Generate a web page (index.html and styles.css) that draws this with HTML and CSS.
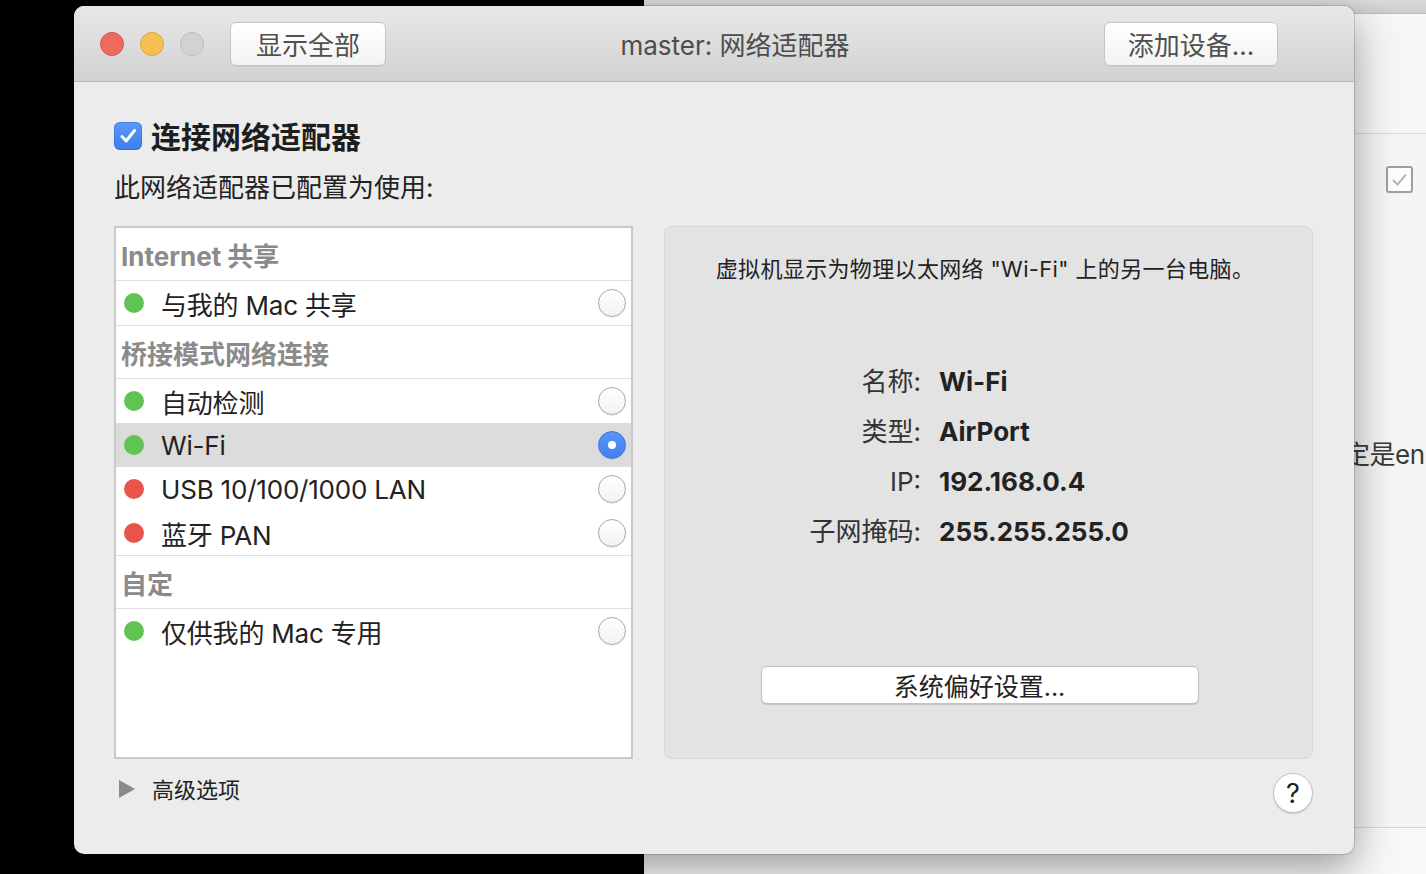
FILE: index.html
```html
<!DOCTYPE html>
<html lang="zh-CN">
<head>
<meta charset="utf-8">
<title>master: 网络适配器</title>
<link rel="stylesheet" href="styles.css">
</head>
<body>
<div class="desktop">
  <div class="dark"></div>
  <div class="app">
    <div class="app-top"></div>
    <div class="app-section"></div>
    <div class="app-check-row">
      <span class="app-check">
        <svg width="23" height="23" viewBox="0 0 23 23"><path d="M5 12 L9.5 16.5 L18 6.5" fill="none" stroke="#b3b8bf" stroke-width="2"/></svg>
      </span>
    </div>
    <div class="app-text">定是en</div>
    <div class="app-spacer"></div>
    <div class="app-bottom"></div>
  </div>

  <div class="window">
    <div class="titlebar">
      <div class="lights">
        <span class="light red"></span>
        <span class="light yellow"></span>
        <span class="light gray"></span>
      </div>
      <div class="tb-btn btn-all">显示全部</div>
      <div class="title">master: 网络适配器</div>
      <div class="tb-btn btn-add">添加设备...</div>
    </div>

    <div class="content">
      <div class="enable">
        <span class="cb">
          <svg width="28" height="28" viewBox="0 0 28 28"><path d="M8 14.5 L12.2 19 L20.5 8.5" fill="none" stroke="#fff" stroke-width="3" stroke-linecap="round" stroke-linejoin="round"/></svg>
        </span>
        <span class="enable-label">连接网络适配器</span>
      </div>
      <div class="subtitle">此网络适配器已配置为使用:</div>

      <div class="columns">
        <div class="list">
          <div class="group-h">Internet 共享</div>
          <div class="row last"><span class="dot green"></span><span class="row-label">与我的 Mac 共享</span><span class="radio"></span></div>

          <div class="group-h">桥接模式网络连接</div>
          <div class="row"><span class="dot green"></span><span class="row-label">自动检测</span><span class="radio"></span></div>
          <div class="row selected"><span class="dot green"></span><span class="row-label">Wi-Fi</span><span class="radio on"><span class="radio-dot"></span></span></div>
          <div class="row"><span class="dot red-dot"></span><span class="row-label">USB 10/100/1000 LAN</span><span class="radio"></span></div>
          <div class="row last"><span class="dot red-dot"></span><span class="row-label">蓝牙 PAN</span><span class="radio"></span></div>

          <div class="group-h">自定</div>
          <div class="row"><span class="dot green"></span><span class="row-label">仅供我的 Mac 专用</span><span class="radio"></span></div>
        </div>

        <div class="panel">
          <div class="desc">虚拟机显示为物理以太网络 "Wi-Fi" 上的另一台电脑。</div>
          <div class="info">
            <div class="info-k">名称:</div><div class="info-v">Wi-Fi</div>
            <div class="info-k">类型:</div><div class="info-v">AirPort</div>
            <div class="info-k">IP:</div><div class="info-v">192.168.0.4</div>
            <div class="info-k">子网掩码:</div><div class="info-v">255.255.255.0</div>
          </div>
          <div class="pref-btn">系统偏好设置...</div>
        </div>
      </div>

      <div class="footer">
        <span class="disclosure"></span>
        <span class="footer-label">高级选项</span>
        <span class="help">?</span>
      </div>
    </div>
  </div>
</div>
</body>
</html>
```

FILE: styles.css
```css
* { box-sizing: border-box; }
html, body { margin: 0; padding: 0; }
body {
  width: 1426px;
  height: 874px;
  overflow: hidden;
  background: #000;
  font-family: Inter, "Noto Sans CJK SC", sans-serif;
}

.desktop {
  position: relative;
  width: 1426px;
  height: 874px;
  display: flex;
}
.dark { width: 644px; flex: none; background: #000; }

/* background application */
.app {
  flex: 1;
  display: flex;
  flex-direction: column;
  overflow: hidden;
  background: #f5f5f5;
}
.app-top {
  height: 14px;
  flex: none;
  background: linear-gradient(#dadada, #cdcdcd);
  border-bottom: 1px solid #bdbdbd;
}
.app-section {
  height: 120px;
  flex: none;
  background: #f6f6f6;
  border-bottom: 1px solid #d9d9d9;
}
.app-check-row { padding: 32px 0 0 742px; flex: none; }
.app-check {
  display: flex;
  width: 27px;
  height: 27px;
  border: 2px solid #9aa0a8;
  border-radius: 3px;
  background: #fdfdfd;
  align-items: center;
  justify-content: center;
}
.app-text {
  margin-top: 247px;
  padding-left: 700px;
  font-size: 26px;
  line-height: 30px;
  color: #3a3a3a;
  white-space: nowrap;
  letter-spacing: -0.5px;
  flex: none;
}
.app-spacer { flex: 1; }
.app-bottom {
  height: 47px;
  flex: none;
  border-top: 1px solid #d6d6d6;
  background: #f8f8f8;
}

/* window */
.window {
  position: absolute;
  left: 74px;
  top: 6px;
  width: 1280px;
  height: 848px;
  border-radius: 10px;
  overflow: hidden;
  background: #ececec;
  box-shadow: 0 0 0 1px rgba(0,0,0,0.14), 0 14px 42px rgba(0,0,0,0.38);
  display: flex;
  flex-direction: column;
}
.titlebar {
  height: 76px;
  flex: none;
  display: flex;
  align-items: center;
  padding: 0 76px 0 26px;
  background: linear-gradient(#e8e8e8, #d2d2d2);
  border-bottom: 1px solid #b4b4b4;
}
.lights { display: flex; gap: 16px; }
.light { width: 24px; height: 24px; border-radius: 50%; }
.red { background: #ee6a5f; border: 1px solid #d5574c; }
.yellow { background: #f6bf4f; border: 1px solid #dca53f; }
.gray { background: #d2d2d2; border: 1px solid #bdbdbd; }

.tb-btn {
  height: 44px;
  display: flex;
  align-items: center;
  justify-content: center;
  border: 1px solid #c4c4c4;
  border-radius: 6px;
  background: linear-gradient(#ffffff, #f3f3f3);
  box-shadow: 0 1px 0 rgba(0,0,0,0.05);
  font-size: 26px;
  color: #505050;
}
.btn-all { width: 156px; margin-left: 26px; }
.btn-add { width: 174px; }
.title {
  flex: 1;
  text-align: center;
  padding-right: 20px;
  font-size: 26px;
  color: #4d4d4d;
}

/* content */
.content {
  flex: 1;
  display: flex;
  flex-direction: column;
  padding: 36px 41px 0 40px;
}
.enable { display: flex; align-items: center; gap: 9px; height: 36px; }
.cb {
  width: 28px;
  height: 28px;
  border-radius: 6px;
  background: linear-gradient(#5b98f8, #3c7def);
  box-shadow: inset 0 0 0 1px rgba(30,90,200,0.35);
  display: flex;
}
.enable-label { font-size: 30px; font-weight: 700; color: #1e1e1e; margin-top: -2px; }
.subtitle { margin-top: 18px; font-size: 26px; line-height: 32px; color: #222; }

.columns { margin-top: 22px; display: flex; gap: 31px; height: 533px; }

.list {
  width: 519px;
  flex: none;
  border: 2px solid #c9c9c9;
  background: #fff;
}
.group-h {
  height: 53px;
  display: flex;
  align-items: center;
  padding-left: 5px;
  border-bottom: 1px solid #e0e0e0;
  font-size: 26px;
  font-weight: 700;
  color: #8b8b8b;
}
.row {
  height: 44px;
  display: flex;
  align-items: center;
  padding: 0 5px 0 8px;
}
.row.last { height: 45px; border-bottom: 1px solid #e0e0e0; }
.row.selected { background: #dcdcdc; }
.dot { width: 20px; height: 20px; border-radius: 50%; flex: none; }
.dot.green { background: #5fc453; }
.dot.red-dot { background: #e9534b; }
.row-label { margin-left: 17px; flex: 1; font-size: 26px; color: #222; letter-spacing: -0.2px; }
.radio {
  width: 28px;
  height: 28px;
  flex: none;
  border-radius: 50%;
  border: 1px solid #a9a9a9;
  background: linear-gradient(#ffffff, #f2f2f2);
  box-shadow: 0 1px 1px rgba(0,0,0,0.08);
  display: flex;
  align-items: center;
  justify-content: center;
}
.radio.on {
  background: linear-gradient(#5b95f6, #3f80f0);
  border-color: #3b78e0;
}
.radio-dot { width: 8px; height: 8px; border-radius: 50%; background: #fff; }

.panel {
  flex: 1;
  display: flex;
  flex-direction: column;
  padding: 30px 18px 54px 0;
  background: #e3e3e3;
  border: 1px solid #d6d6d6;
  border-radius: 8px;
}
.desc {
  text-align: center;
  padding-left: 11px;
  font-size: 22px;
  line-height: 24px;
  color: #222;
  letter-spacing: 0.35px;
}
.info {
  margin-top: 76px;
  display: grid;
  grid-template-columns: 256px auto;
  column-gap: 18px;
  justify-content: start;
}
.info-k { text-align: right; font-size: 26px; line-height: 50px; color: #333; }
.info-v { font-size: 26px; line-height: 50px; font-weight: 700; color: #222; }
.pref-btn {
  margin-top: auto;
  align-self: center;
  width: 438px;
  height: 38px;
  display: flex;
  align-items: center;
  justify-content: center;
  background: #fff;
  border: 1px solid #c2c2c2;
  border-radius: 6px;
  box-shadow: 0 1px 1px rgba(0,0,0,0.15);
  font-size: 25px;
  color: #222;
}

.footer { margin-top: 14px; height: 40px; display: flex; align-items: center; }
.disclosure {
  width: 0;
  height: 0;
  margin-left: 5px;
  margin-top: -9px;
  border-left: 16px solid #8a8a8a;
  border-top: 9px solid transparent;
  border-bottom: 9px solid transparent;
}
.footer-label { margin-left: 17px; margin-top: -10px; font-size: 22px; color: #222; }
.help {
  margin-left: auto;
  width: 40px;
  height: 40px;
  border-radius: 50%;
  background: #fff;
  border: 1px solid #c3c3c3;
  box-shadow: 0 1px 1px rgba(0,0,0,0.15);
  display: flex;
  align-items: center;
  justify-content: center;
  font-size: 27px;
  color: #222;
}
```
